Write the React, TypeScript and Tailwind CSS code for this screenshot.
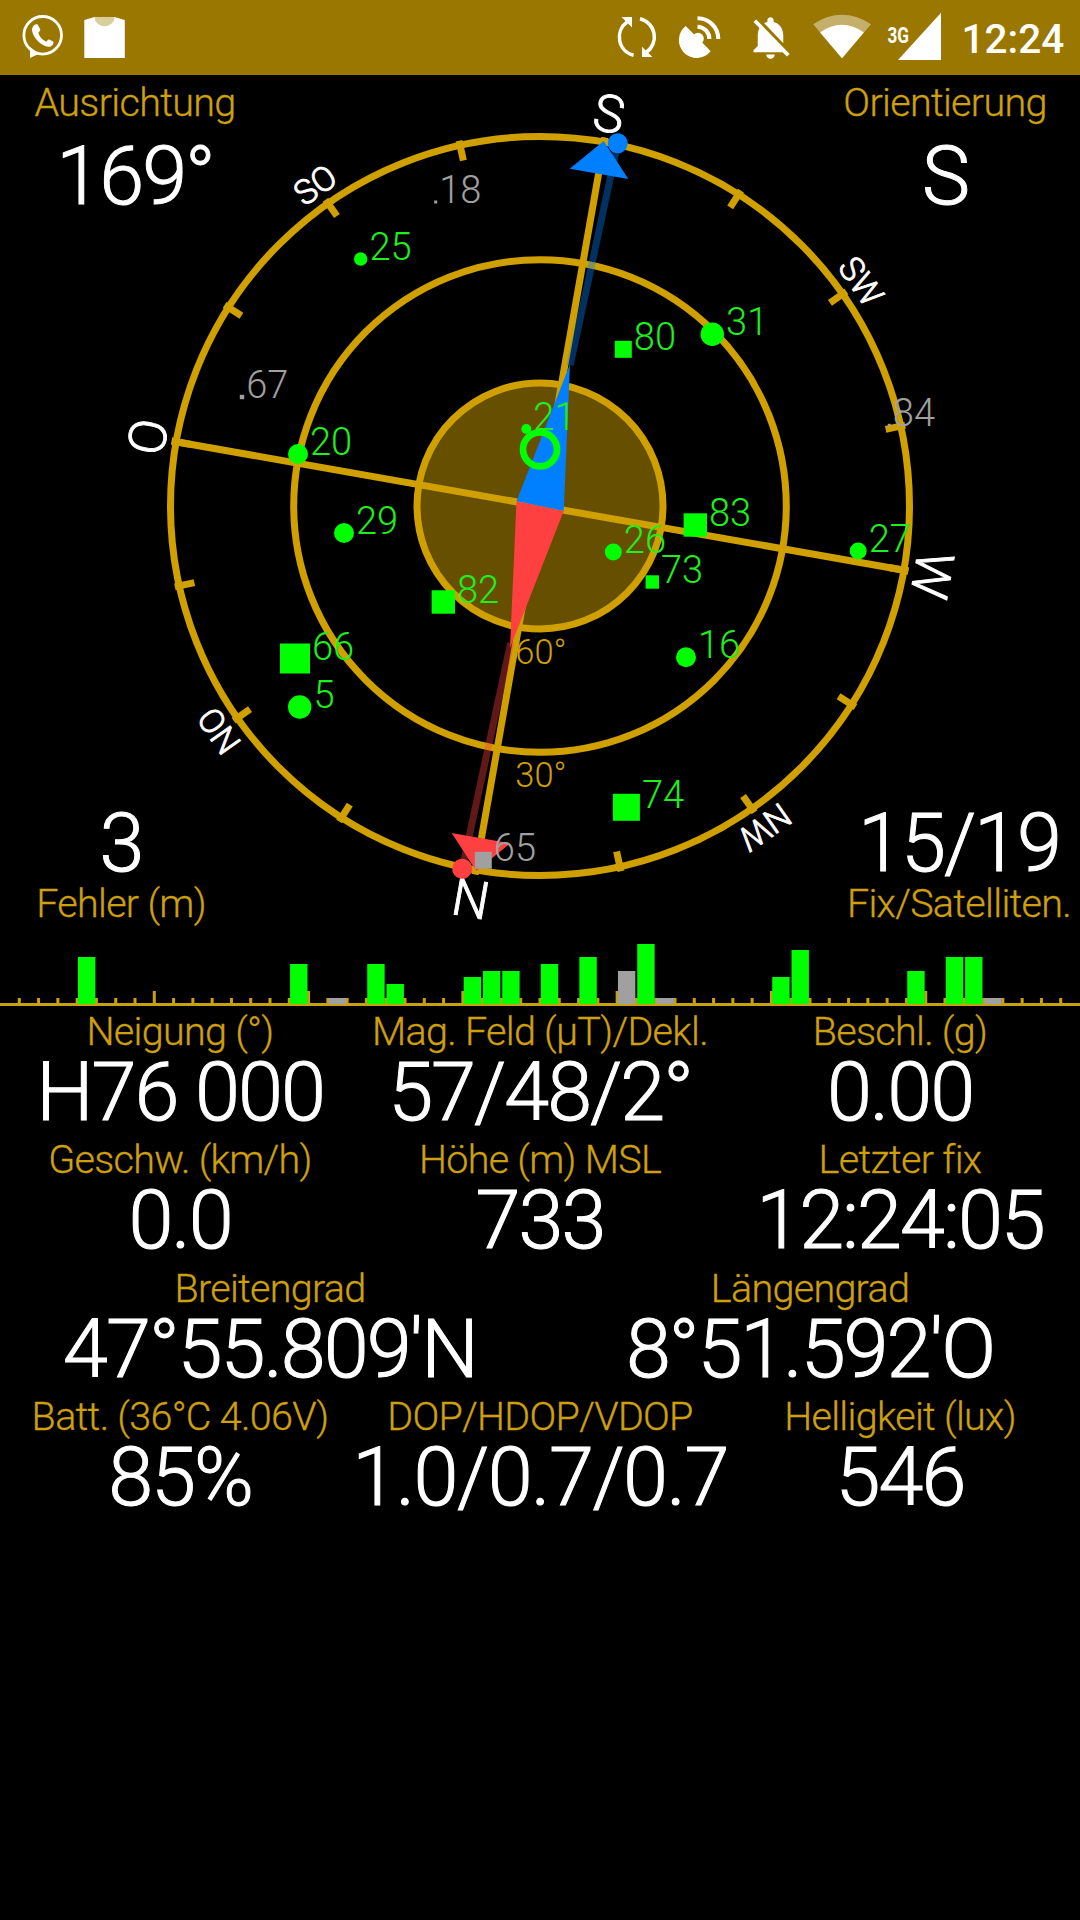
import React from 'react'
import clsx from 'clsx'
import { MdNotificationsOff } from 'react-icons/md'

type Shape = 'circle' | 'square'

interface Satellite {
  id: number
  x: number
  y: number
  size: number
  shape: Shape
  used: boolean
}

interface SignalBar {
  slot: number
  height: number
  used: boolean
}

interface Reading {
  label: string
  value: string
  wide?: boolean
}

const CX = 540
const CY = 506
const RADIUS = 369.5
const HEADING = 10
const MAGNETIC = 12.1

const satellites: Satellite[] = [
  { id: 18, x: 435.7, y: 202, size: 3, shape: 'square', used: false },
  { id: 25, x: 360.7, y: 259, size: 13.4, shape: 'circle', used: true },
  { id: 67, x: 242, y: 397, size: 4.4, shape: 'square', used: false },
  { id: 20, x: 298, y: 454, size: 20, shape: 'circle', used: true },
  { id: 80, x: 623.3, y: 349.3, size: 17, shape: 'square', used: true },
  { id: 31, x: 712.3, y: 334.3, size: 23.4, shape: 'circle', used: true },
  { id: 84, x: 889.3, y: 425.3, size: 3, shape: 'square', used: false },
  { id: 21, x: 526.3, y: 429, size: 10, shape: 'circle', used: true },
  { id: 26, x: 613.3, y: 552, size: 17, shape: 'circle', used: true },
  { id: 73, x: 652.3, y: 582, size: 13.4, shape: 'square', used: true },
  { id: 83, x: 695.3, y: 525, size: 23.4, shape: 'square', used: true },
  { id: 27, x: 858.2, y: 551, size: 17, shape: 'circle', used: true },
  { id: 29, x: 344, y: 533, size: 20, shape: 'circle', used: true },
  { id: 82, x: 443.3, y: 602, size: 23.4, shape: 'square', used: true },
  { id: 66, x: 295, y: 658.5, size: 30, shape: 'square', used: true },
  { id: 5, x: 299.7, y: 707, size: 23.4, shape: 'circle', used: true },
  { id: 16, x: 686, y: 657.3, size: 20, shape: 'circle', used: true },
  { id: 74, x: 626.4, y: 807.3, size: 27, shape: 'square', used: true },
  { id: 65, x: 483.3, y: 860.3, size: 17, shape: 'square', used: false },
]

const bars: SignalBar[] = [
  { slot: 4, height: 47, used: true },
  { slot: 15, height: 40, used: true },
  { slot: 17, height: 6, used: false },
  { slot: 19, height: 40, used: true },
  { slot: 20, height: 20, used: true },
  { slot: 24, height: 27, used: true },
  { slot: 25, height: 33, used: true },
  { slot: 26, height: 33, used: true },
  { slot: 28, height: 40, used: true },
  { slot: 30, height: 47, used: true },
  { slot: 32, height: 33, used: false },
  { slot: 33, height: 60, used: true },
  { slot: 34, height: 6, used: false },
  { slot: 40, height: 27, used: true },
  { slot: 41, height: 54, used: true },
  { slot: 47, height: 33, used: true },
  { slot: 49, height: 47, used: true },
  { slot: 50, height: 47, used: true },
  { slot: 51, height: 6, used: false },
]

// bearing relative to the top of the dial before the heading is applied
const directions = [
  { text: 'S', angle: 0, size: 52 },
  { text: 'SW', angle: 45, size: 34 },
  { text: 'W', angle: 90, size: 52 },
  { text: 'NW', angle: 135, size: 34 },
  { text: 'N', angle: 180, size: 52 },
  { text: 'NO', angle: 225, size: 34 },
  { text: 'O', angle: 270, size: 52 },
  { text: 'SO', angle: 315, size: 34 },
]

const rows: Reading[][] = [
  [
    { label: 'Neigung (°)', value: 'H76 000' },
    { label: 'Mag. Feld (µT)/Dekl.', value: '57/48/2°' },
    { label: 'Beschl. (g)', value: '0.00' },
  ],
  [
    { label: 'Geschw. (km/h)', value: '0.0' },
    { label: 'Höhe (m) MSL', value: '733' },
    { label: 'Letzter fix', value: '12:24:05' },
  ],
  [
    { label: 'Breitengrad', value: "47°55.809'N" },
    { label: 'Längengrad', value: "8°51.592'O" },
  ],
  [
    { label: 'Batt. (36°C 4.06V)', value: '85%' },
    { label: 'DOP/HDOP/VDOP', value: '1.0/0.7/0.7', wide: true },
    { label: 'Helligkeit (lux)', value: '546' },
  ],
]

function StatusBar() {
  return (
    <header className="flex h-[75px] items-start justify-between bg-[#9a7700]">
      <svg width="140" height="75" viewBox="0 0 140 75" fill="#fff">
        <circle cx="42.7" cy="35.3" r="18.8" fill="none" stroke="#fff" strokeWidth="2.8" />
        <path d="M30 47v11l9-4.2z" />
        <path d="M37.5 24.3L40.3 29.4C40.6 30.9 38.2 31.8 38.4 33C39.5 37 42.5 40 45.8 41.4C47 41.6 47.6 39.3 49 39.4L53.2 41.6C54.2 42.9 52.5 46.3 49.8 46.8C44 47.6 33.5 39.5 32 30.5C31.6 27.2 34.5 23.3 37.5 24.3Z" />
        <path d="M84.3 20L94.5 17H114.5L124.8 20V58H84.3Z" />
        <path d="M94.5 17a10 9.3 0 0 0 20 0z" fill="#d9cd99" />
      </svg>
      <div className="flex items-start">
        <svg width="60" height="75" viewBox="607 0 60 75" fill="none" stroke="#fff" strokeWidth="3.5">
          <path d="M633.6 55.3A18.7 18.7 0 0 1 627 22" />
          <path d="M640 18.8A18.7 18.7 0 0 1 646.4 52.3" />
          <path d="M621.5 17H632V27.5Z" fill="#fff" stroke="none" />
          <path d="M642 46.7V57H652.4Z" fill="#fff" stroke="none" />
        </svg>
        <svg width="77.5" height="75" viewBox="667 0 77.5 75" fill="#fff">
          <path d="M685.7 26A17.9 17.9 0 1 0 710.7 51.3L703.6 44Z" />
          <circle cx="698" cy="38.6" r="5.8" />
          <path
            d="M697.5 26.7A12.3 12.3 0 0 1 709.4 39M697.5 18.2A20.8 20.8 0 0 1 718.3 39"
            fill="none"
            stroke="#fff"
            strokeWidth="4.1"
          />
        </svg>
        <MdNotificationsOff size={51} className="mt-[11.5px]" color="#fff" />
        <svg width="84.5" height="75" viewBox="795.5 0 84.5 75" fill="#fff">
          <path d="M841.5 58.3L812.7 24.2Q841.5 5.4 870.5 24.2Z" opacity=".42" />
          <path d="M841.5 58.3L819.6 32.4Q841.5 17.2 863.3 32.4Z" />
        </svg>
        <svg width="84.5" height="75" viewBox="880 0 84.5 75" fill="#fff">
          <path d="M898 60H941V12.7Z" />
          <text
            x="887.5"
            y="42.6"
            textLength="21.5"
            lengthAdjust="spacingAndGlyphs"
            className="text-[22px] font-bold"
          >
            3G
          </text>
        </svg>
        <span className="-ml-[3px] w-[118.5px] text-[40.5px] leading-[78px] font-medium">12:24</span>
      </div>
    </header>
  )
}

function Marker({ sat }: { sat: Satellite }) {
  const color = sat.used ? '#00ff00' : '#a0a0a0'
  const r = sat.size / 2
  return (
    <g>
      {sat.shape === 'circle' ? (
        <circle cx={sat.x} cy={sat.y} r={r} fill={color} />
      ) : (
        <rect x={sat.x - r} y={sat.y - r} width={sat.size} height={sat.size} fill={color} />
      )}
      <text
        x={sat.x + r + 2}
        y={sat.y + 1}
        fill={sat.used ? '#1df01d' : color}
        className="text-[38px] font-light"
      >
        {sat.id}
      </text>
    </g>
  )
}

function Compass() {
  return (
    <svg
      className="col-start-1 row-start-1"
      width="1080"
      height="868"
      viewBox="0 75 1080 868"
    >
      <circle cx={CX} cy={CY} r={123} fill="#665000" />
      <g fill="none" stroke="#cfa000" strokeWidth="7">
        <circle cx={CX} cy={CY} r={123} />
        <circle cx={CX} cy={CY} r={246.3} />
        <circle cx={CX} cy={CY} r={RADIUS} />
        <g transform={`translate(${CX} ${CY}) rotate(${HEADING})`}>
          <path d="M0 -374V374M-374 0H374" />
          {Array.from({ length: 16 }, (_, i) => (
            <path key={i} d="M0 -374V-354" transform={`rotate(${i * 22.5})`} />
          ))}
        </g>
      </g>

      <g fill="#cfa000" textAnchor="middle" className="text-[34.5px] font-light">
        <text x={CX + 1} y="664">60°</text>
        <text x={CX + 1} y="787">30°</text>
      </g>

      <g
        transform={`translate(${CX} ${CY}) rotate(${HEADING})`}
        fill="#fff"
        stroke="#fff"
        strokeWidth="0.9"
        textAnchor="middle"
      >
        {directions.map((d) => (
          <text
            key={d.text}
            y={-380}
            fontSize={d.size}
            transform={`rotate(${d.angle})`}
            className="font-light"
          >
            {d.text}
          </text>
        ))}
      </g>

      {/* magnetic needle */}
      <g transform={`translate(${CX} ${CY}) rotate(${MAGNETIC})`} strokeWidth="7">
        <path d="M0 -144V-365" stroke="#0080ff" strokeOpacity=".38" />
        <path d="M0 140V365" stroke="#ff4040" strokeOpacity=".38" />
      </g>
      <path d="M570 364L516.5 501.3L563.7 511Z" fill="#0080ff" />
      <path d="M510 648L516.5 501.3L563.7 511Z" fill="#ff4040" />
      <path d="M603.7 141L569.7 168.7L628.3 179Z" fill="#0080ff" />
      <path d="M476.3 871L451.7 833L510.3 843.3Z" fill="#ff4040" />
      <g transform={`translate(${CX} ${CY}) rotate(${MAGNETIC})`}>
        <circle cy={-371} r="10" fill="#0080ff" />
        <circle cy={371} r="10" fill="#ff4040" />
      </g>

      <circle cx={CX} cy="449.3" r="17" fill="none" stroke="#00ff00" strokeWidth="6.7" />
      {satellites.map((sat) => (
        <Marker key={sat.id} sat={sat} />
      ))}
    </svg>
  )
}

function SignalStrip() {
  const step = 1080 / 56
  return (
    <svg className="block" width="1080" height="65" viewBox="0 943 1080 65">
      {Array.from({ length: 55 }, (_, i) => i + 1).map((i) => (
        <rect
          key={i}
          x={i * step - 1.5}
          y={i % 8 === 0 ? 991 : 998}
          width="3"
          height={i % 8 === 0 ? 14 : 7}
          fill="#c9a010"
        />
      ))}
      <rect y="1003" width="1080" height="3" fill="#c9a010" />
      {bars.map((bar) => (
        <rect
          key={bar.slot}
          x={bar.slot * step + 0.8}
          y={1004 - bar.height}
          width="17.4"
          height={bar.height}
          fill={bar.used ? '#00ff00' : '#a0a0a0'}
        />
      ))}
    </svg>
  )
}

function Label({ children }: { children: React.ReactNode }) {
  return (
    <div className="text-[39.5px] leading-[44px] font-light tracking-[-0.7px] whitespace-nowrap text-[#cfa00c] [-webkit-text-stroke:0.3px_#cfa00c]">
      {children}
    </div>
  )
}

// flex keeps values wider than their column centred
function Value({ children, wide }: { children: React.ReactNode; wide?: boolean }) {
  return (
    <div
      className={clsx(
        'flex justify-center text-[81px] leading-[77px] font-light whitespace-pre [-webkit-text-stroke:1px_#fff]',
        wide ? 'tracking-[-1.5px]' : 'tracking-[-2px]',
      )}
    >
      {children}
    </div>
  )
}

export default function App() {
  return (
    <div className="h-[1920px] w-[1080px] overflow-hidden bg-black font-['Roboto',sans-serif] text-white">
      <StatusBar />

      <section className="grid h-[868px]">
        <Compass />
        <div className="col-start-1 row-start-1 flex flex-col justify-between">
          <div className="flex justify-between pt-[6px] text-center">
            <div className="w-[270px]">
              <Label>Ausrichtung</Label>
              <div className="pt-[13px]">
                <Value>169°</Value>
              </div>
            </div>
            <div className="w-[270px]">
              <Label>Orientierung</Label>
              <div className="pt-[13px]">
                <Value>S</Value>
              </div>
            </div>
          </div>
          <div className="flex justify-between pb-[17px] text-center">
            <div className="w-[242px]">
              <Value>3</Value>
              <Label>Fehler (m)</Label>
            </div>
            <div className="w-[242px]">
              <Value>15/19</Value>
              <Label>Fix/Satelliten.</Label>
            </div>
          </div>
        </div>
      </section>

      <SignalStrip />

      <section className="flex flex-col pt-[2px] text-center">
        {rows.map((row) => (
          <div key={row[0].label} className="flex h-[128.3px]">
            {row.map((reading) => (
              <div key={reading.label} className="min-w-0 flex-1">
                <Label>{reading.label}</Label>
                <Value wide={reading.wide}>{reading.value}</Value>
              </div>
            ))}
          </div>
        ))}
      </section>
    </div>
  )
}
